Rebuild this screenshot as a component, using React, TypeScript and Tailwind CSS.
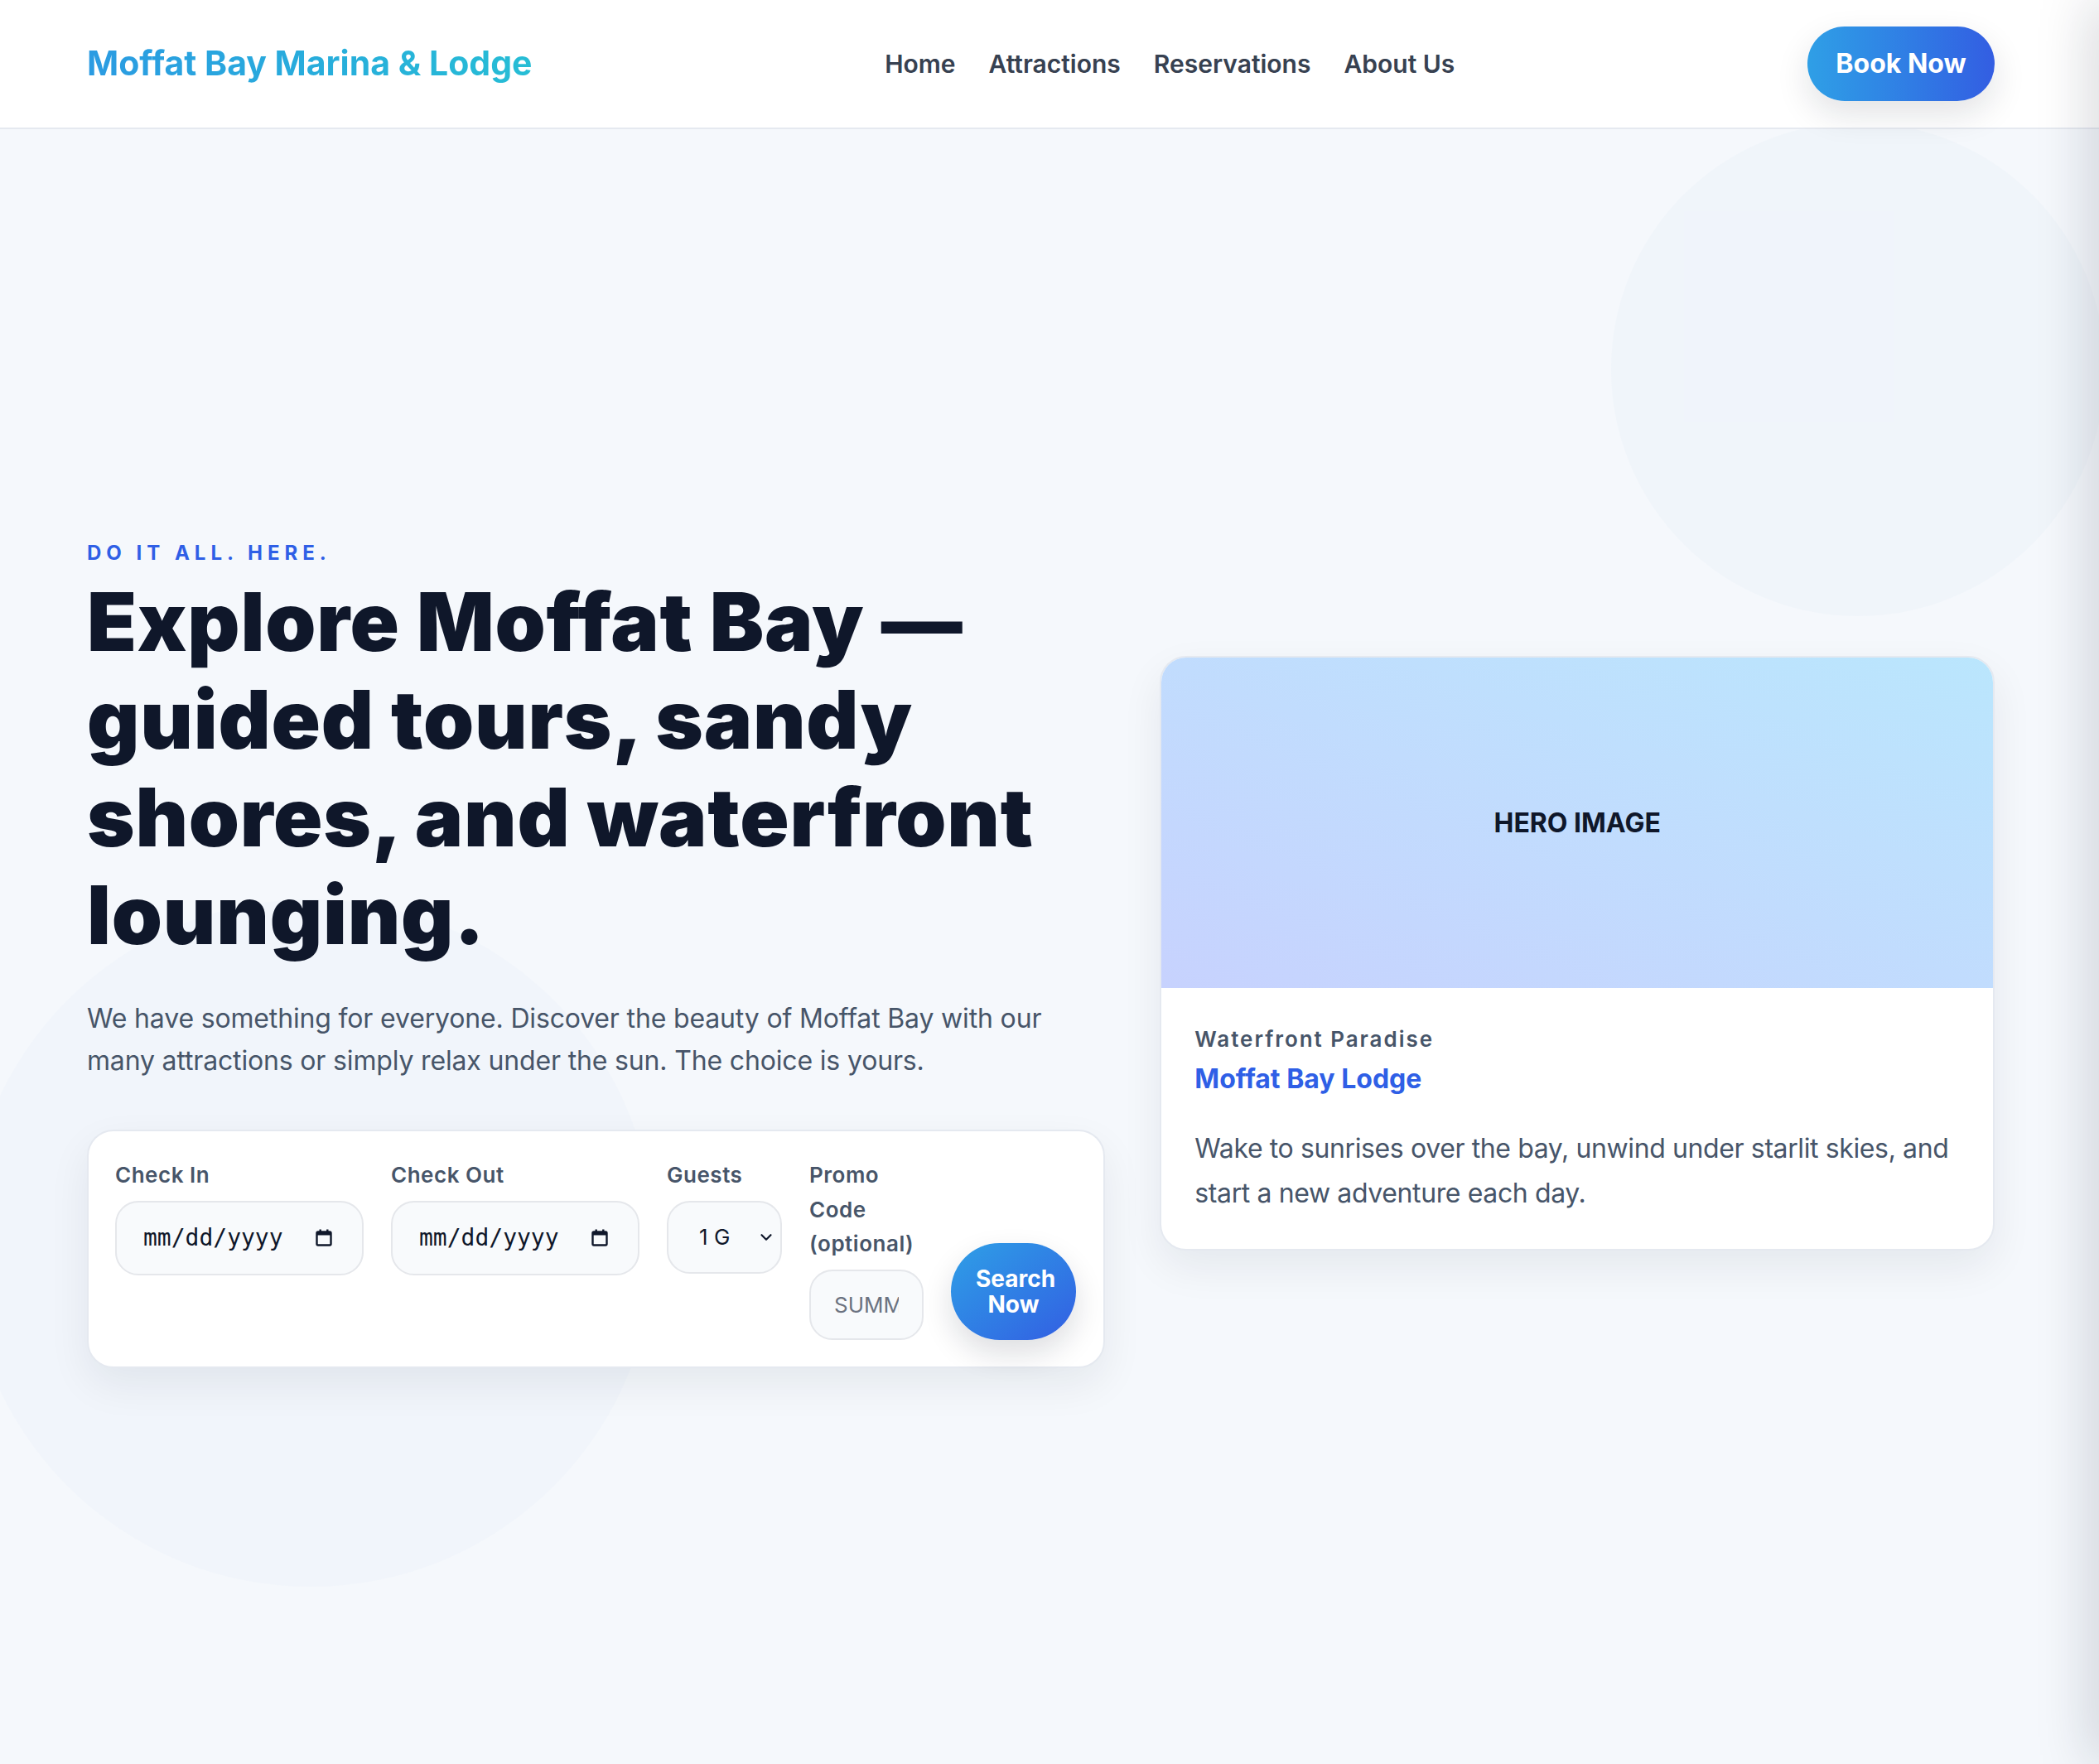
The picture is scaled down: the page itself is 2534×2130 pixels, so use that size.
import { ChevronDown } from "lucide-react";

const navLinks = ["Home", "Attractions", "Reservations", "About Us"];

const CalendarIcon = () => (
  <svg width="20" height="21" viewBox="0 0 20 21" fill="none" aria-hidden="true">
    <rect x="1.5" y="3.5" width="17" height="16" rx="1.5" stroke="#0f172a" strokeWidth="2.4" />
    <rect x="1.5" y="3.5" width="17" height="4" fill="#0f172a" />
    <rect x="4.5" y="0.5" width="2.4" height="4" fill="#0f172a" />
    <rect x="13.1" y="0.5" width="2.4" height="4" fill="#0f172a" />
  </svg>
);

function DateField({ label }: { label: string }) {
  return (
    <label className="flex flex-col gap-[10px]">
      <span className="text-[26px] font-semibold leading-[1.6] tracking-[0.02em] text-[#475569]">{label}</span>
      <span className="flex h-[90px] items-center justify-between rounded-[28px] border-2 border-[#e5e7eb] bg-[#f8fafc] pl-[32px] pr-[36px]">
        <span className="font-['DejaVu_Sans_Mono',monospace] text-[28px] text-[#0f172a]">mm/dd/yyyy</span>
        <CalendarIcon />
      </span>
    </label>
  );
}

export default function App() {
  return (
    <div className="relative min-h-[2130px] overflow-hidden bg-[#f5f8fc] font-['Inter',sans-serif] flex flex-col">
      {/* Header */}
      <header className="relative z-10 flex h-[156px] shrink-0 items-center justify-between border-b-2 border-[#e5e9f0] bg-white pl-[105px] pr-[126px]">
        <a className="bg-linear-to-r from-[#2b9be2] to-[#26bdd5] bg-clip-text text-[41px] font-bold text-transparent">
          Moffat Bay Marina &amp; Lodge
        </a>
        <nav className="flex items-center gap-[40px]">
          {navLinks.map((l) => (
            <a key={l} className="text-[30px] font-semibold text-[#374151]">
              {l}
            </a>
          ))}
        </nav>
        <button className="flex h-[90px] w-[226px] items-center justify-center rounded-full bg-linear-to-r from-[#2f9fe6] to-[#335de2] text-[32px] font-bold text-white shadow-[0_16px_40px_rgba(15,23,42,0.12)]">
          Book Now
        </button>
      </header>

      {/* Hero */}
      <main className="relative flex flex-1 items-center pt-[16px] pl-[105px] pr-[126px]">
        {/* background circles */}
        <div className="absolute top-[-8px] left-[1945px] h-[596px] w-[596px] rounded-full bg-[#eef3fa]/70" />
        <div className="absolute top-[930px] left-[-40px] h-[830px] w-[830px] rounded-full bg-[#eef3fa]/60" />

        <div className="relative grid w-full grid-cols-[1.22fr_1fr] items-center gap-[66px]">
          {/* Left */}
          <div className="flex flex-col">
            <p className="text-[24px] font-bold leading-[36px] tracking-[0.25em] text-[#2f5fe6]">DO IT ALL. HERE.</p>
            <h1 className="mt-[6px] text-[98px] font-black leading-[118px] tracking-[0.008em] text-[#0f172a]">
              Explore Moffat Bay — guided tours, sandy shores, and waterfront lounging.
            </h1>
            <p className="mt-[40px] max-w-[1180px] text-[32px] leading-[1.6] tracking-[-0.005em] text-[#475569]">
              We have something for everyone. Discover the beauty of Moffat Bay with our many attractions or simply relax under the sun. The choice is yours.
            </p>

            {/* Booking form */}
            <form className="mt-[58px] rounded-[32px] border-2 border-[#e5e9f0] bg-white p-[32px] shadow-[0_20px_50px_rgba(15,23,42,0.07)]">
              <div className="grid grid-cols-[300px_300px_139px_138px_151px] items-start gap-x-[33px]">
                <DateField label="Check In" />
                <DateField label="Check Out" />
                <label className="flex flex-col gap-[10px]">
                  <span className="text-[26px] font-semibold leading-[1.6] tracking-[0.02em] text-[#475569]">Guests</span>
                  <span className="flex h-[88px] items-center justify-between rounded-[28px] border-2 border-[#e5e7eb] bg-[#f8fafc] pl-[37px] pr-[6px]">
                    <span className="w-[38px] overflow-hidden whitespace-nowrap text-[26px] text-[#0f172a]">1 Guest</span>
                    <ChevronDown size={22} strokeWidth={2.4} className="text-[#0f172a]" />
                  </span>
                </label>
                <label className="flex flex-col gap-[10px]">
                  <span className="text-[26px] font-semibold leading-[1.6] tracking-[0.02em] text-[#475569]">Promo Code (optional)</span>
                  <input
                    placeholder="SUMMER25"
                    className="h-[85px] w-full rounded-[28px] border-2 border-[#e5e7eb] bg-[#f8fafc] px-[28px] text-[26px] text-[#0f172a] outline-none placeholder:text-[#6b7280]"
                  />
                </label>
                <button
                  type="button"
                  className="self-end h-[117px] rounded-full bg-linear-to-br from-[#2f9fe6] to-[#335de2] px-[30px] text-[28px] font-bold leading-[31px] text-white shadow-[0_16px_36px_rgba(15,23,42,0.14)]"
                >
                  Search Now
                </button>
              </div>
            </form>
          </div>

          {/* Right card */}
          <div className="overflow-hidden rounded-[32px] border-2 border-[#e5e9f0] bg-white shadow-[0_20px_50px_rgba(15,23,42,0.07)]">
            <div className="flex h-[399px] items-center justify-center bg-linear-to-tr from-[#c7d2fe] to-[#bae6fd]">
              <span className="text-[32px] font-bold text-[#0f172a]">HERO IMAGE</span>
            </div>
            <div className="px-[40px] pt-[42px] pb-[40px]">
              <p className="text-[26px] font-semibold leading-[39px] tracking-[0.075em] text-[#475569]">Waterfront Paradise</p>
              <h2 className="mt-[8px] text-[32px] font-bold leading-[42px] text-[#2f5fe6]">Moffat Bay Lodge</h2>
              <p className="mt-[36px] text-[32px] leading-[54px] tracking-[-0.012em] text-[#475569]">
                Wake to sunrises over the bay, unwind under starlit skies, and start a new adventure each day.
              </p>
            </div>
          </div>
        </div>
      </main>

      {/* offscreen panel shadow at right edge */}
      <div className="pointer-events-none absolute top-0 left-full z-20 h-full w-[40px] shadow-[0_0_70px_rgba(15,23,42,0.26)]" />
    </div>
  );
}
